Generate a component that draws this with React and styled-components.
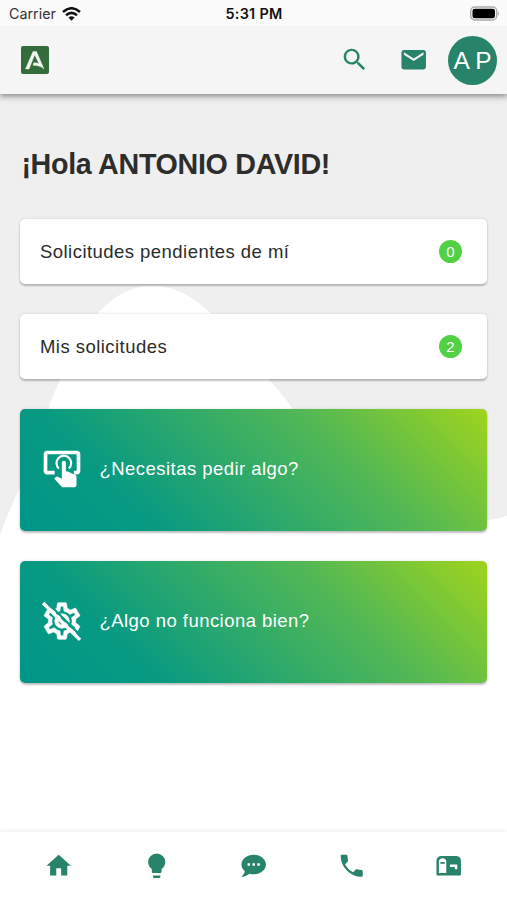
import React from "react"
import styled, { createGlobalStyle } from "styled-components"

const GlobalStyle = createGlobalStyle`
  * {
    box-sizing: border-box;
  }
  body {
    margin: 0;
    background-color: white;
    font-family: "Liberation Sans", Arial, sans-serif;
  }
`;
const Screen = styled.div`
  position: relative;
  width: 507px;
  height: 900px;
  display: flex;
  flex-direction: column;
  overflow: hidden;
  background-color: white;
`;
const Wave = styled.svg`
  position: absolute;
  top: 94px;
  left: 0;
  width: 507px;
  height: 450px;
`;
const Header = styled.header`
  position: relative;
  height: 94px;
  background-color: #f5f5f5;
  box-shadow: 0 2px 5px rgba(0, 0, 0, 0.36), 0 4px 8px rgba(0, 0, 0, 0.1);
`;
const StatusBar = styled.div`
  display: grid;
  grid-template-columns: 1fr auto 1fr;
  align-items: center;
  height: 26px;
  padding: 1px 7px 0 9px;
  background-color: #fbfbfb;
  color: #111;
  font-family: Inter, sans-serif;
`;
const Carrier = styled.div`
  display: flex;
  align-items: center;
  gap: 6px;
  font-size: 14.3px;
  color: #333;
`;
const Clock = styled.div`
  margin-left: -1px;
  font-size: 14.4px;
  font-weight: 600;
  letter-spacing: 0.3px;
`;
const Battery = styled.svg`
  justify-self: end;
`;
const Toolbar = styled.div`
  display: flex;
  align-items: center;
  height: 68px;
  padding: 0 10px 0 21px;
  color: #27836a;
`;
const ToolbarActions = styled.div`
  display: flex;
  align-items: center;
  margin-left: auto;
`;
const IconButton = styled.button`
  display: flex;
  align-items: center;
  justify-content: center;
  width: 59px;
  height: 49px;
  padding: 0;
  border: none;
  background: none;
  color: inherit;
`;
const Avatar = styled.div`
  width: 49px;
  height: 49px;
  margin-left: 4.5px;
  border-radius: 50%;
  background-color: #27836a;
  color: white;
  font-size: 24.5px;
  line-height: 49px;
  text-align: center;
  white-space: nowrap;
`;
const Content = styled.main`
  position: relative;
  flex: 1;
  display: flex;
  flex-direction: column;
  padding: 52px 19.6px 0 20.4px;
`;
const Title = styled.h1`
  margin: 0 0 36.5px;
  padding-left: 1px;
  height: 36px;
  line-height: 36px;
  font-size: 28.7px;
  font-weight: bold;
  letter-spacing: -0.32px;
  color: #2d2d2d;
  white-space: nowrap;
`;
const Card = styled.div`
  display: flex;
  align-items: center;
  flex-shrink: 0;
  height: ${(props) => (props.$action ? "122.4px" : "65.5px")};
  margin-bottom: 29.6px;
  padding: ${(props) => (props.$action ? "0 20px 2px" : "0 25.5px 0 19.6px")};
  border-radius: 5px;
  background: ${(props) => (props.$action ? "linear-gradient(45deg, #009688 0%, #089a82 24%, #52b855 68%, #9fd41d 100%)" : "white")};
  color: ${(props) => (props.$action ? "white" : "#2b2b2b")};
  box-shadow: 0 2px 2px rgba(0, 0, 0, 0.22), 0 0 3px rgba(0, 0, 0, 0.12);
`;
const CardLabel = styled.span`
  padding-top: 1px;
  font-size: 18.5px;
  line-height: 22px;
  letter-spacing: 0.46px;
  white-space: nowrap;
`;
const Count = styled.span`
  width: 23px;
  height: 23px;
  margin-left: auto;
  border-radius: 50%;
  background-color: #51d143;
  color: white;
  font-size: 15px;
  line-height: 23px;
  text-align: center;
`;
const CardIcon = styled.svg`
  width: 44px;
  height: 44px;
  margin-right: 15.6px;
  margin-left: -0.5px;
`;
const BottomNav = styled.nav`
  position: relative;
  display: flex;
  align-items: center;
  justify-content: space-between;
  height: 68px;
  padding: 0 9px 0 10px;
  background-color: white;
  box-shadow: 0 -2px 4px rgba(0, 0, 0, 0.06);
  color: #27836a;
`;
const NavItem = styled.a`
  display: flex;
  flex: 1;
  justify-content: center;
`;

const icons = {
  search: "M9.5,3A6.5,6.5 0 0,1 16,9.5C16,11.11 15.41,12.59 14.44,13.73L14.71,14H15.5L20.5,19L19,20.5L14,15.5V14.71L13.73,14.44C12.59,15.41 11.11,16 9.5,16A6.5,6.5 0 0,1 3,9.5A6.5,6.5 0 0,1 9.5,3M9.5,5C7,5 5,7 5,9.5C5,12 7,14 9.5,14C12,14 14,12 14,9.5C14,7 12,5 9.5,5Z",
  email: "M20,8L12,13L4,8V6L12,11L20,6M20,4H4C2.89,4 2,4.89 2,6V18A2,2 0 0,0 4,20H20A2,2 0 0,0 22,18V6C22,4.89 21.1,4 20,4Z",
  home: "M10,20V14H14V20H19V12H22L12,3L2,12H5V20H10Z",
  bulb: "M12,2A7,7 0 0,0 5,9C5,11.38 6.19,13.47 8,14.74V17A1,1 0 0,0 9,18H15A1,1 0 0,0 16,17V14.74C17.81,13.47 19,11.38 19,9A7,7 0 0,0 12,2M9,21A1,1 0 0,0 10,22H14A1,1 0 0,0 15,21V20H9V21Z",
  chat: "M12,3C17.5,3 22,6.58 22,11C22,15.42 17.5,19 12,19C10.76,19 9.57,18.82 8.47,18.5C5.55,21 2,21 2,21C4.33,18.67 4.7,17.1 4.75,16.5C3.05,15.07 2,13.13 2,11C2,6.58 6.5,3 12,3M17,12V10H15V12H17M13,12V10H11V12H13M9,12V10H7V12H9Z",
  phone: "M6.62,10.79C8.06,13.62 10.38,15.94 13.21,17.38L15.41,15.18C15.69,14.9 16.08,14.82 16.43,14.93C17.55,15.3 18.75,15.5 20,15.5A1,1 0 0,1 21,16.5V20A1,1 0 0,1 20,21A17,17 0 0,1 3,4A1,1 0 0,1 4,3H7.5A1,1 0 0,1 8.5,4C8.5,5.25 8.7,6.45 9.07,7.57C9.18,7.92 9.1,8.31 8.82,8.59L6.62,10.79Z",
  mailbox: "M6,4H18A4,4 0 0,1 22,8V19A1,1 0 0,1 21,20H3A1,1 0 0,1 2,19V8A4,4 0 0,1 6,4M7,6A3,3 0 0,0 4,9V18H10V9A3,3 0 0,0 7,6M5.2,9H8.8V10.5H5.2V9M13,11V13H17V15H19V11H13Z",
};

const cog = "M12,8A4,4 0 0,1 16,12A4,4 0 0,1 12,16A4,4 0 0,1 8,12A4,4 0 0,1 12,8M12,10A2,2 0 0,0 10,12A2,2 0 0,0 12,14A2,2 0 0,0 14,12A2,2 0 0,0 12,10M10,22C9.75,22 9.54,21.82 9.5,21.58L9.13,18.93C8.5,18.68 7.96,18.34 7.44,17.94L4.95,18.95C4.73,19.03 4.46,18.95 4.34,18.73L2.34,15.27C2.21,15.05 2.27,14.78 2.46,14.63L4.57,12.97L4.5,12L4.57,11L2.46,9.37C2.27,9.22 2.21,8.95 2.34,8.73L4.34,5.27C4.46,5.05 4.73,4.96 4.95,5.05L7.44,6.05C7.96,5.66 8.5,5.32 9.13,5.07L9.5,2.42C9.54,2.18 9.75,2 10,2H14C14.25,2 14.46,2.18 14.5,2.42L14.87,5.07C15.5,5.32 16.04,5.66 16.56,6.05L19.05,5.05C19.27,4.96 19.54,5.05 19.66,5.27L21.66,8.73C21.79,8.95 21.73,9.22 21.54,9.37L19.43,11L19.5,12L19.43,13L21.54,14.63C21.73,14.78 21.79,15.05 21.66,15.27L19.66,18.73C19.54,18.95 19.27,19.04 19.05,18.95L16.56,17.95C16.04,18.34 15.5,18.68 14.87,18.93L14.5,21.58C14.46,21.82 14.25,22 14,22H10M11.25,4L10.88,6.61C9.68,6.86 8.62,7.5 7.85,8.39L5.44,7.35L4.69,8.65L6.8,10.2C6.4,11.37 6.4,12.64 6.8,13.8L4.68,15.36L5.43,16.66L7.86,15.62C8.63,16.5 9.68,17.14 10.87,17.38L11.24,20H12.76L13.13,17.39C14.32,17.14 15.37,16.5 16.14,15.62L18.57,16.66L19.32,15.36L17.2,13.81C17.6,12.64 17.6,11.37 17.2,10.2L19.31,8.65L18.56,7.35L16.15,8.39C15.38,7.5 14.32,6.86 13.12,6.62L12.75,4H11.25Z";

const Icon = ({ name }) => (
    <svg width="29.4" height="29.4" viewBox="0 0 24 24" fill="currentColor">
        <path fillRule="evenodd" d={icons[name]} />
    </svg>
);

const Logo = () => (
    <svg width="28" height="28" viewBox="0 0 28 28">
        <rect width="28" height="28" rx="2" fill="#326d3b" />
        <path d="M4.500 23L12 5.500H15.500L23 23C20.500 20.500 17 19.300 12 19.300L12.800 16.800C15 16.800 16.600 17.200 18 17.800L13.700 8.700L8 23Z" fill="#f3f6ef" stroke="#f3f6ef" strokeWidth="0.4" />
    </svg>
);

const WifiIcon = () => (
    <svg width="19" height="14" viewBox="0 0 19 14" fill="none" stroke="#111" strokeWidth="2.5">
        <path d="M1 5Q9.500 -2.500 18 5" />
        <path d="M4 8.300Q9.500 3.500 15 8.300" />
        <path d="M6.500 10.500Q9.500 8 12.500 10.500L9.500 13.700Z" fill="#111" stroke="none" />
    </svg>
);

const TapIcon = () => (
    <CardIcon viewBox="0 0 24 24">
        <path d="M8 14H4A1 1 0 0 1 3 13V4A1 1 0 0 1 4 3H20A1 1 0 0 1 21 4V13A1 1 0 0 1 20 14H18.500" fill="none" stroke="white" strokeWidth="2" />
        <path d="M10.300 11.700A4 4 0 1 1 15.700 11.700" fill="none" stroke="white" strokeWidth="1.200" />
        <path d="M13 7.500A1.100 1.100 0 0 1 14.100 8.600V13.200L15.100 13.300L19.100 15.200A1.300 1.300 0 0 1 19.900 16.400V20.600A1.500 1.500 0 0 1 18.400 22H12.800A1.500 1.500 0 0 1 11.700 21.500L7.800 17.300L8.500 16.500A1.100 1.100 0 0 1 9.400 16.100L11.900 17.300V8.600A1.100 1.100 0 0 1 13 7.500Z" fill="white" />
    </CardIcon>
);

const CogOffIcon = () => (
    <CardIcon viewBox="0 0 24 24">
        <mask id="cogGap">
            <rect width="24" height="24" fill="white" />
            <path d="M3.500 1.400L23.500 21.400" stroke="black" strokeWidth="1.200" />
        </mask>
        <path d={cog} fill="white" stroke="white" strokeWidth="0.3" mask="url(#cogGap)" />
        <path d="M1.700 2.200L21.800 22.300" stroke="white" strokeWidth="1.900" />
    </CardIcon>
);

const App = () => {
    return (
        <Screen>
            <GlobalStyle />
            <Wave viewBox="0 94 507 450">
                <path d="M0 94H507V516C455 531 407 514 365 484C330 458 310 430 292 408C285 398 278 389 270 381C248 356 230 332 210 313C194 297 175 285 150 286C129 286 111 299 98 313C80 334 67 355 60 380C53 396 50 402 49 410C43 435 31 463 20 487C12 505 5 520 0 536Z" fill="#efefef" />
            </Wave>
            <Header>
                <StatusBar>
                    <Carrier>Carrier <WifiIcon /></Carrier>
                    <Clock>5:31 PM</Clock>
                    <Battery width="31" height="15" viewBox="0 0 31 15">
                        <rect x="1.700" y="1" width="26" height="13" rx="4" fill="#fbfbfb" stroke="#aaa" strokeWidth="1.400" />
                        <rect x="3.500" y="2.700" width="22.500" height="9.500" rx="2.300" fill="#000" />
                        <path d="M29 5Q31 7.500 29 10Z" fill="#aaa" />
                    </Battery>
                </StatusBar>
                <Toolbar>
                    <Logo />
                    <ToolbarActions>
                        <IconButton><Icon name="search" /></IconButton>
                        <IconButton><Icon name="email" /></IconButton>
                        <Avatar>A P</Avatar>
                    </ToolbarActions>
                </Toolbar>
            </Header>
            <Content>
                <Title>¡Hola ANTONIO DAVID!</Title>
                <Card>
                    <CardLabel>Solicitudes pendientes de mí</CardLabel>
                    <Count>0</Count>
                </Card>
                <Card>
                    <CardLabel>Mis solicitudes</CardLabel>
                    <Count>2</Count>
                </Card>
                <Card $action>
                    <TapIcon />
                    <CardLabel>¿Necesitas pedir algo?</CardLabel>
                </Card>
                <Card $action>
                    <CogOffIcon />
                    <CardLabel>¿Algo no funciona bien?</CardLabel>
                </Card>
            </Content>
            <BottomNav>
                {["home", "bulb", "chat", "phone", "mailbox"].map((name) => {
                    return <NavItem key={name}><Icon name={name} /></NavItem>
                })}
            </BottomNav>
        </Screen>
    );
};

export default App;
